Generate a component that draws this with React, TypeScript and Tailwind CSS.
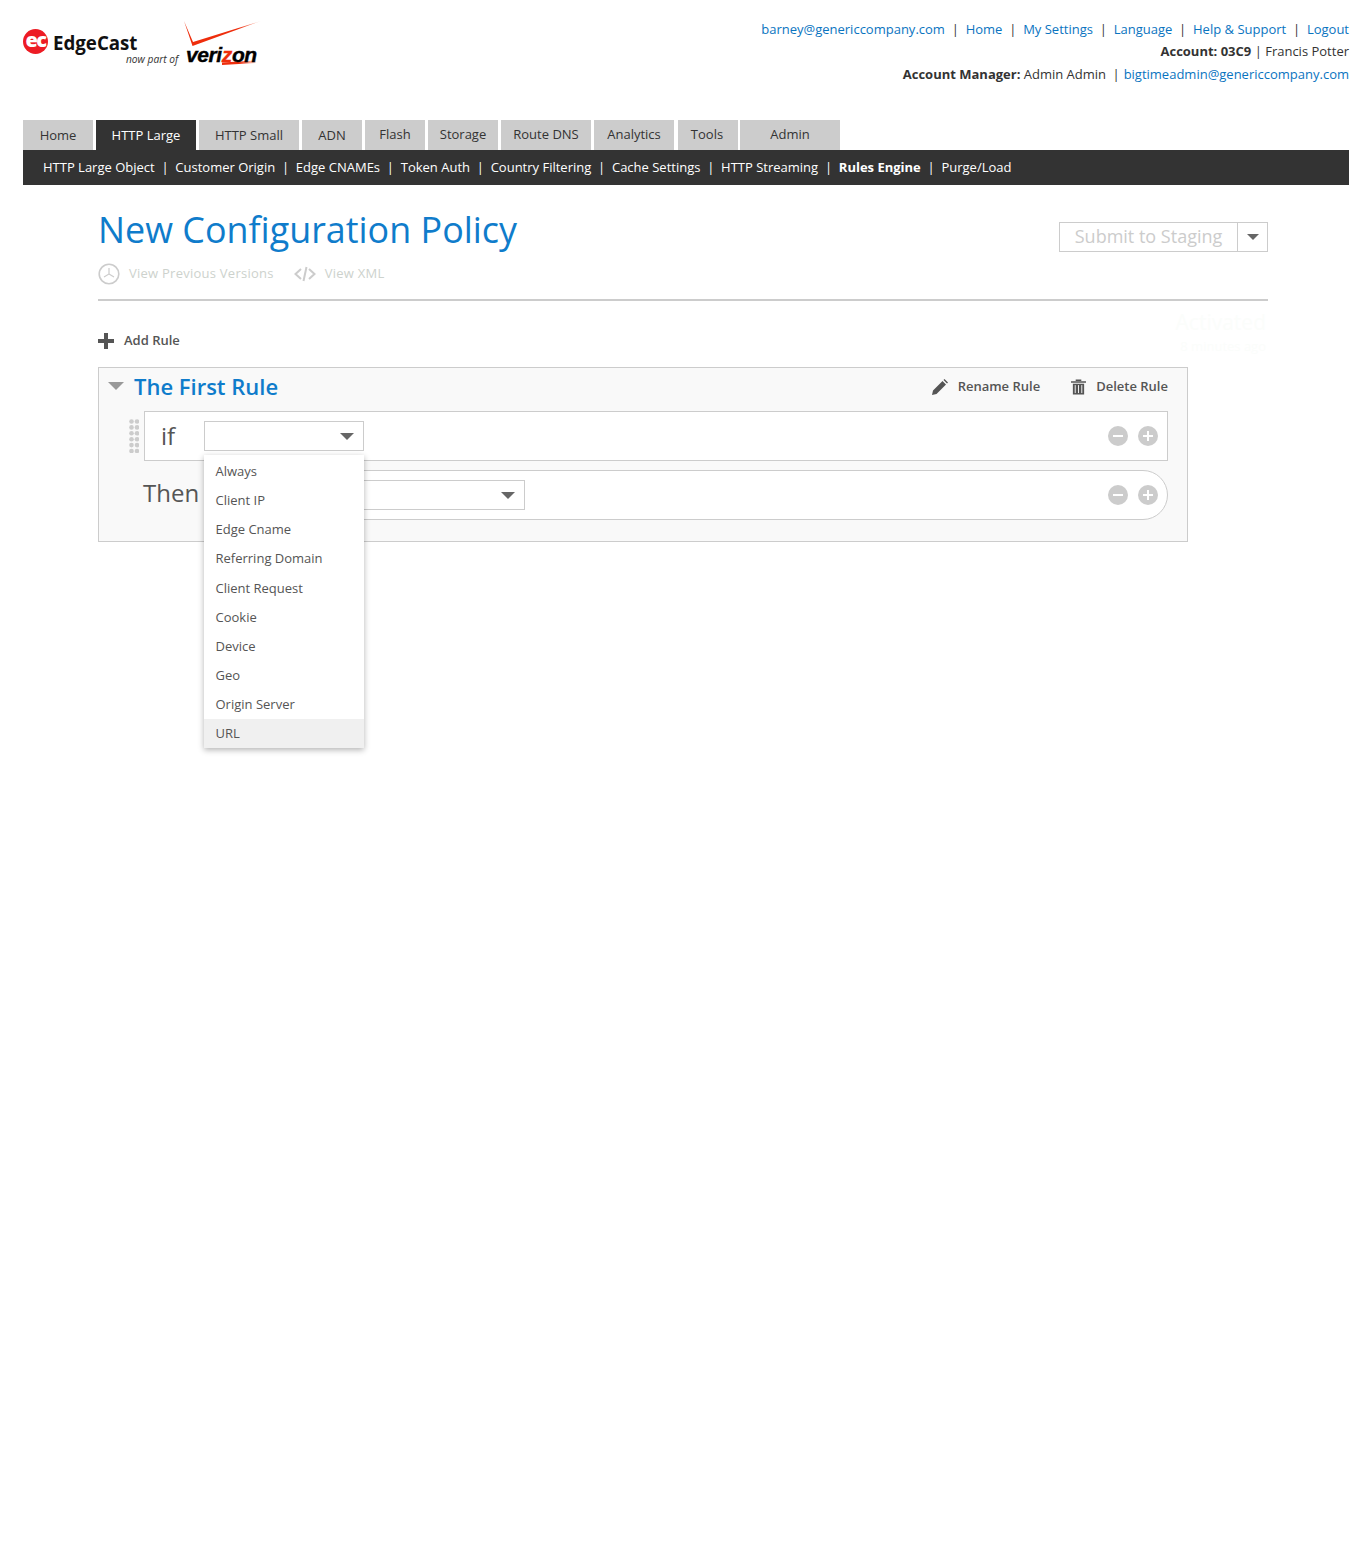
import React from 'react';

const font = "font-['Open_Sans',sans-serif]";

const tabs = [
  { label: 'Home', cls: 'w-[70px] pt-[1px]' },
  { label: 'HTTP Large', cls: 'w-[100px] pt-[1px] bg-[#333333] text-white', active: true },
  { label: 'HTTP Small', cls: 'w-[100px] pt-[1px]' },
  { label: 'ADN', cls: 'w-[60px] pt-[1px]' },
  { label: 'Flash', cls: 'w-[60px]' },
  { label: 'Storage', cls: 'w-[70px]' },
  { label: 'Route DNS', cls: 'w-[90px]' },
  { label: 'Analytics', cls: 'w-[80px]' },
  { label: 'Tools', cls: 'ml-[1px] mr-[-1px] w-[60px] pr-[2px]' },
  { label: 'Admin', cls: 'w-[100px]' },
];

const subNav = [
  'HTTP Large Object',
  'Customer Origin',
  'Edge CNAMEs',
  'Token Auth',
  'Country Filtering',
  'Cache Settings',
  'HTTP Streaming',
  'Rules Engine',
  'Purge/Load',
];

const topLinks = ['barney@genericcompany.com', 'Home', 'My Settings', 'Language', 'Help & Support', 'Logout'];

const conditions = [
  'Always',
  'Client IP',
  'Edge Cname',
  'Referring Domain',
  'Client Request',
  'Cookie',
  'Device',
  'Geo',
  'Origin Server',
  'URL',
];

const Caret = ({ className }: { className: string }) => (
  <span className={`block h-0 w-0 border-x-transparent border-t-[#666666] ${className}`} />
);

const Logo = () => (
  <div className="flex items-start">
    <div className="mt-[29px] flex h-[25px] w-[25px] items-center justify-center rounded-full bg-[#ed1c24] pb-[3px] text-[20px] font-extrabold tracking-[-1.5px] text-white">
      ec
    </div>
    <div className="ml-[6px] mt-[29px] flex w-[125px] flex-col">
      <span className="-ml-[1px] text-[18.7px] font-bold leading-[27px] text-[#111111]">EdgeCast</span>
      <span className="-mt-[3px] ml-[72px] whitespace-nowrap text-[10.2px] italic leading-[12px] text-[#333333]">
        now part of
      </span>
    </div>
    <div className="relative ml-[4px] mt-[20px] h-[48px] w-[80px]">
      <svg width="80" height="50" viewBox="0 0 80 50" className="absolute left-0 top-0">
        <defs>
          <linearGradient id="check" x1="0" x2="1" y1="0" y2="0">
            <stop offset="0" stopColor="#ee2d0c" />
            <stop offset="0.7" stopColor="#ee2d0c" />
            <stop offset="1" stopColor="#fbc4b6" />
          </linearGradient>
          <linearGradient id="tail" x1="0" x2="1" y1="0" y2="0">
            <stop offset="0" stopColor="#ee2d0c" />
            <stop offset="0.5" stopColor="#ee2d0c" />
            <stop offset="1" stopColor="#fde0d8" />
          </linearGradient>
        </defs>
        <path d="M1 1 L9.500 26 L78 1 L10 22 Z" fill="url(#check)" />
        <path d="M39 42.500 L73 40.500 V43 L39 45 Z" fill="url(#tail)" />
      </svg>
      <span className="absolute left-[3px] top-[24px] font-['Liberation_Sans',sans-serif] text-[21px] font-bold italic leading-[22px] tracking-[-0.4px] text-black [-webkit-text-stroke:0.4px_black]">
        veri<span className="text-[#ee2d0c] [-webkit-text-stroke:0.4px_#ee2d0c]">z</span>on
      </span>
    </div>
  </div>
);

const RoundButton = ({ minus }: { minus?: boolean }) => (
  <span className="relative block h-5 w-5 rounded-full bg-[#cccccc]">
    <span className="absolute left-[5px] top-[9px] h-[2px] w-[10px] bg-white" />
    {!minus && <span className="absolute left-[9px] top-[5px] h-[10px] w-[2px] bg-white" />}
  </span>
);

const RowButtons = () => (
  <div className="flex items-center gap-[10px]">
    <RoundButton minus />
    <RoundButton />
  </div>
);

const Grip = () => (
  <svg width="10" height="34" viewBox="0 0 10 34" className="-ml-[1px] mr-[5px] mt-[8px] shrink-0" fill="#cccccc">
    {[0, 1, 2, 3, 4, 5].map((row) => (
      <g key={row}>
        <circle cx="2.5" cy={2.5 + row * 5.9} r="2.3" />
        <circle cx="8" cy={2.5 + row * 5.9} r="2.3" />
      </g>
    ))}
  </svg>
);

export default function App() {
  return (
    <div className={`${font} min-h-[1560px] bg-white pl-[23px] pr-[17px]`}>
      <header className="flex h-[120px] items-start justify-between">
        <Logo />
        <div className="flex flex-col items-end pt-[18px] text-[13px] leading-[22.5px] text-[#333333]">
          <div className="flex">
            {topLinks.map((link, i) => (
              <span key={link} className="flex">
                {i > 0 && <span className="mx-[6.8px] text-[#333333]">|</span>}
                <a className="text-[#0a74bf]">{link}</a>
              </span>
            ))}
          </div>
          <div className="-mt-[1px] mb-[1px]">
            <b className="font-bold">Account: 03C9</b> | Francis Potter
          </div>
          <div>
            <b className="font-bold">Account Manager:</b> Admin Admin <span className="ml-[3px] mr-[4px]">|</span>
            <a className="text-[#0a74bf]">bigtimeadmin@genericcompany.com</a>
          </div>
        </div>
      </header>

      <nav className="flex h-[30px] gap-[3px]">
        {tabs.map((tab) => (
          <div
            key={tab.label}
            className={`flex h-[30px] items-center justify-center text-[13px] ${
              tab.active ? '' : 'bg-[#cccccc] text-[#333333]'
            } ${tab.cls}`}
          >
            {tab.label}
          </div>
        ))}
      </nav>

      <div className="flex h-[35px] items-center bg-[#333333] pl-[20px] text-[13px] text-white">
        {subNav.map((item, i) => (
          <span key={item} className="flex">
            {i > 0 && <span className="mx-[6.75px]">|</span>}
            <span className={item === 'Rules Engine' ? 'font-bold' : ''}>{item}</span>
          </span>
        ))}
      </div>

      <main className="ml-[75px] mr-[81px]">
        <div className="flex h-[116px] items-start justify-between border-b-2 border-[#cccccc]">
          <div>
            <h1 className="mt-[20px] text-[35.9px] font-normal leading-[50px] text-[#0f7ccb]">New Configuration Policy</h1>
            <div className="mt-[8px] flex items-center text-[13px] tracking-[0.25px] text-[#cdd2cd]">
              <svg width="22" height="22" viewBox="0 0 22 22" fill="none" stroke="#cccccc" className="mr-[9px]">
                <circle cx="11" cy="11" r="9.8" strokeWidth="1.6" />
                <path d="M11 5v6l-5 3M11 11l5 3" strokeWidth="1.2" />
              </svg>
              <span>View Previous Versions</span>
              <svg width="22" height="16" viewBox="0 0 22 16" fill="none" stroke="#cccccc" strokeWidth="2" className="ml-[20px] mr-[9px]">
                <path d="M7 3 1.5 8 7 13M15 3l5.500 5-5.500 5M12.500 1 9.500 15" />
              </svg>
              <span>View XML</span>
            </div>
          </div>
          <div className="mt-[37px] flex h-[30px] border border-[#cccccc]">
            <div className="flex w-[178px] items-center justify-center border-r border-[#cccccc] pb-[1px] text-[18px] text-[#cccccc]">
              Submit to Staging
            </div>
            <div className="flex w-[29px] items-center justify-center">
              <Caret className="border-x-[6px] border-t-[6px]" />
            </div>
          </div>
        </div>

        <div className="relative flex h-[66px] items-center pt-[14px] text-[13px] font-semibold text-[#555555]">
          <span className="relative mr-[10px] block h-4 w-4">
            <span className="absolute left-0 top-[6px] h-1 w-4 bg-[#555555]" />
            <span className="absolute left-[6px] top-0 h-4 w-1 bg-[#555555]" />
          </span>
          Add Rule
          <div className="absolute right-[2px] top-[11px] w-[100px] text-right text-[13px] font-normal leading-[21px] text-[#fbfdfb]">
            <span className="text-[21px]">Activated</span>
            <br />8 minutes ago
          </div>
        </div>

        <section className="h-[175px] w-[1090px] border border-[#cccccc] bg-[#f9f9f9]">
          <div className="flex h-[43px] items-center justify-between pb-[6px] pl-[9px] pr-[19px]">
            <div className="flex items-center">
              <Caret className="mb-[1px] mr-[10px] border-x-[8px] border-t-[8px] border-t-[#999999]" />
              <h2 className="-mt-[2px] text-[22px] font-semibold leading-[38px] text-[#0f7ccb]">The First Rule</h2>
            </div>
            <div className="flex items-center text-[13px] font-semibold text-[#555555]">
              <svg width="16" height="16" viewBox="0 0 16 16" fill="#555555" className="mr-[10px]">
                <path d="M0 16l1-4.500L10.500 2l3.500 3.500L4.500 15zM11.500 1l1-1 3.500 3.500-1 1z" />
              </svg>
              Rename Rule
              <svg width="15" height="17" viewBox="0 0 16 17" fill="#555555" className="ml-[31px] mr-[10px]">
                <path d="M0 3h16v1.500H0zM5 1h6v1.500H5zM2 5.500h12V17H2z" />
                <path d="M4.500 7v8.500M8 7v8.500M11.500 7v8.500" stroke="#f9f9f9" strokeWidth="1" />
              </svg>
              Delete Rule
            </div>
          </div>

          <div className="flex pl-[31px] pr-[19px]">
            <Grip />
            <div className="flex h-[50px] flex-1 items-center justify-between border border-[#cccccc] bg-white pl-[16px] pr-[9px]">
              <div className="flex items-center">
                <span className="w-[43px] text-[24px] text-[#555555]">if</span>
                <div className="relative flex h-[30px] w-[160px] items-center justify-end border border-[#cccccc] bg-white pr-[9px]">
                  <Caret className="border-x-[7px] border-t-[7px]" />
                  <ul className="absolute left-[-1px] top-[33px] z-10 h-[293px] w-[160px] bg-white pt-[2.4px] text-[13px] text-[#555555] shadow-[0_2px_6px_rgba(0,0,0,0.3)]">
                    {conditions.map((item) => (
                      <li
                        key={item}
                        className={`flex h-[29.1px] items-center pl-[11.5px] ${item === 'URL' ? 'bg-[#f0f0f0]' : ''}`}
                      >
                        {item}
                      </li>
                    ))}
                  </ul>
                </div>
              </div>
              <RowButtons />
            </div>
          </div>

          <div className="mt-[9px] flex items-center pl-[44px] pr-[19px]">
            <span className="w-[61px] pb-[4px] text-[24px] text-[#555555]">Then</span>
            <div className="flex h-[50px] flex-1 items-center justify-between rounded-r-[25px] border border-[#cccccc] bg-white pl-[60px] pr-[9px]">
              <div className="flex h-[30px] w-[260px] items-center justify-end border border-[#cccccc] pr-[9px]">
                <Caret className="border-x-[7px] border-t-[7px]" />
              </div>
              <RowButtons />
            </div>
          </div>
        </section>
      </main>
    </div>
  );
}
